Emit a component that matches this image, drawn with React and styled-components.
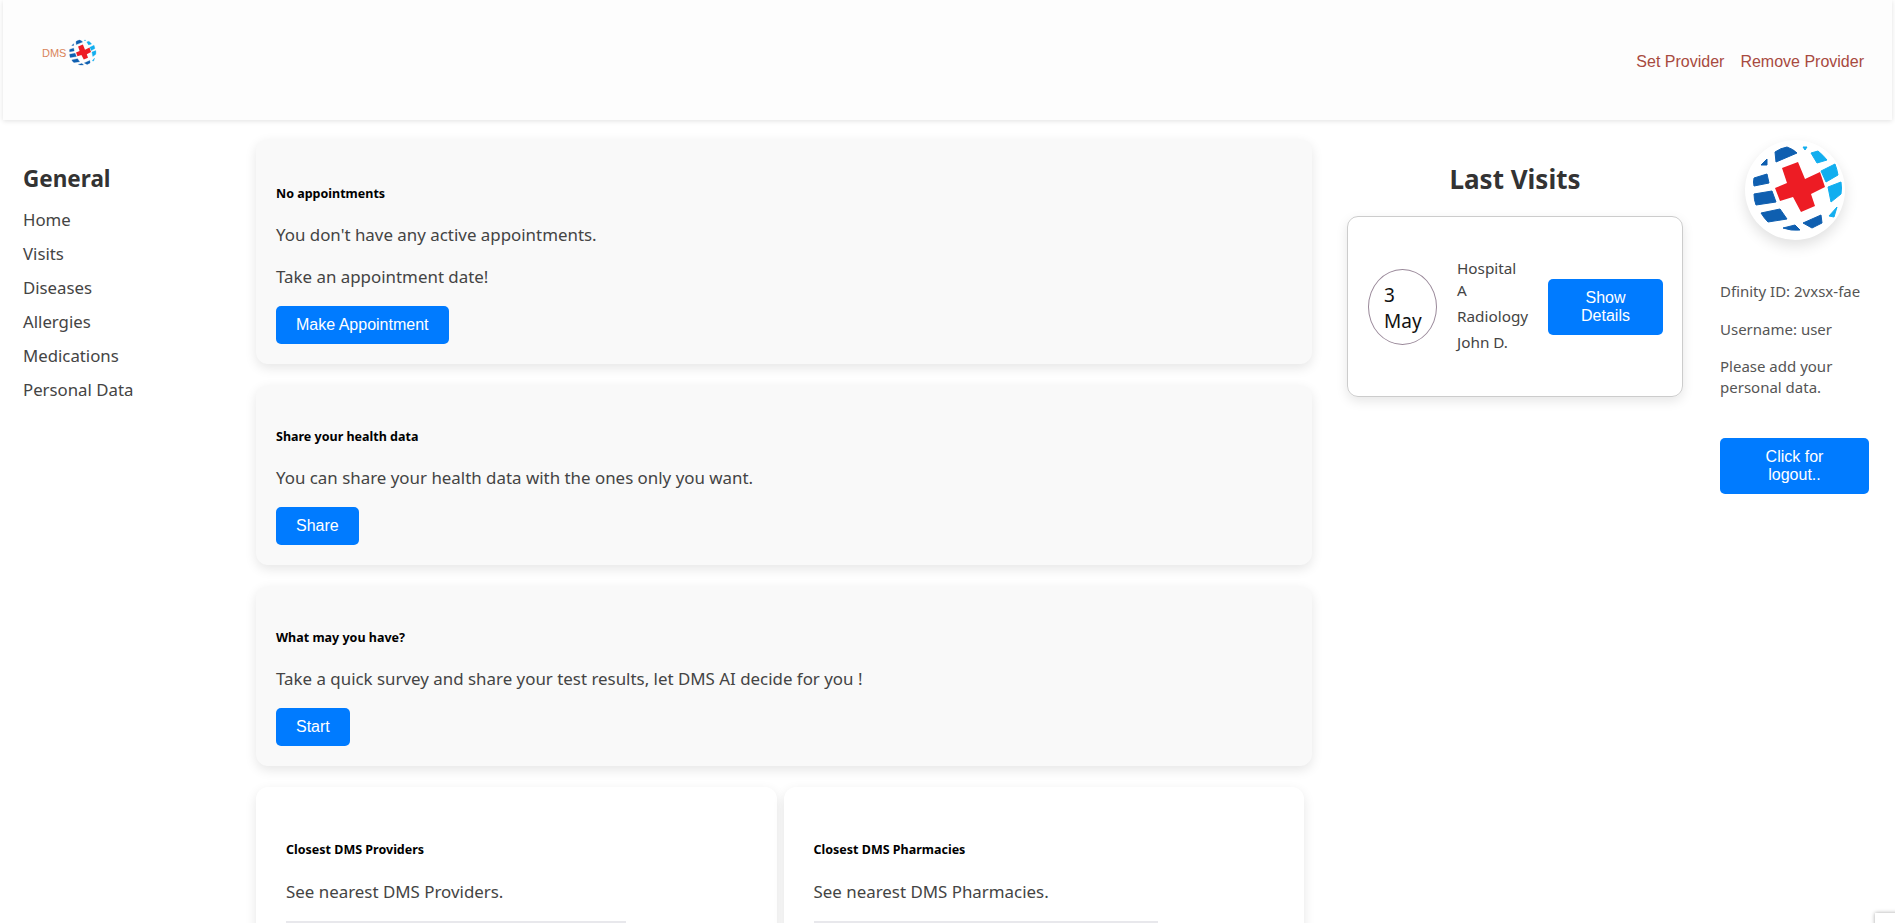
import React from 'react'
import styled, { createGlobalStyle } from 'styled-components'

const GlobalStyle = createGlobalStyle`
  html, body {
    margin: 0;
    padding: 0;
    background: #fff;
    overflow: hidden;
  }
  body {
    font-family: "Noto Sans", "Open Sans", sans-serif;
    color: #333;
  }
`

const Page = styled.div`
  width: 1895px;
  height: 923px;
  overflow: hidden;
`

const Header = styled.header`
  height: 120px;
  margin: 0 3px;
  padding: 38px 28px 0 39px;
  box-sizing: border-box;
  background: #fdfdfd;
  box-shadow: 0 1px 5px rgba(0, 0, 0, 0.12);
  display: flex;
  justify-content: space-between;
  align-items: flex-start;
`

const Logo = styled.div`
  display: flex;
  align-items: center;
  gap: 1px;
  font-family: "Liberation Sans", Arial, sans-serif;
  font-size: 11px;
  color: #d9845a;
`

const ProviderLinks = styled.nav`
  display: flex;
  gap: 16px;
  padding-top: 15px;
`

const ProviderLink = styled.a`
  font-family: "Liberation Sans", Arial, sans-serif;
  font-size: 16px;
  color: #a84a40;
`

const Content = styled.div`
  display: flex;
  align-items: flex-start;
  padding-top: 19px;
`

const Sidebar = styled.aside`
  width: 256px;
  flex: none;
  padding: 23px 0 0 23px;
  box-sizing: border-box;
`

const SideTitle = styled.h2`
  margin: 0 0 7px;
  font-size: 22.5px;
  line-height: 34px;
  font-weight: 700;
`

const SideItem = styled.a`
  display: block;
  font-size: 16.8px;
  line-height: 34px;
  color: #444;
`

const Main = styled.main`
  width: 1056px;
  flex: none;
  display: flex;
  flex-direction: column;
  gap: 21px;
`

const Card = styled.section`
  background: ${props => props.$background || '#f9f9f9'};
  border-radius: 12px;
  box-shadow: 0 4px 12px rgba(0, 0, 0, 0.1);
  padding: ${props => props.$padding || '37px 20px 20px'};
  flex: ${props => props.$flex || 'none'};
`

const CardTitle = styled.h5`
  margin: 1.5px 0 15.5px;
  font-size: 12.5px;
  line-height: 26px;
  font-weight: 700;
  color: #000;
`

const CardText = styled.p`
  margin: 0 0 16px;
  font-size: 16.9px;
  line-height: 26px;
  color: #444;
`

const Button = styled.button`
  display: block;
  border: none;
  border-radius: 5px;
  background: #007bff;
  color: #fff;
  font-family: "Liberation Sans", Arial, sans-serif;
  font-size: 16px;
  line-height: 18px;
  padding: 10px 20px;
`

const LogoutButton = styled(Button)`
  width: 149px;
  margin-top: 40px;
`

const ImageStrip = styled.div`
  height: 40px;
  width: ${props => props.$width}px;
  background: #e8e8ec;
`

const CardRow = styled.div`
  display: flex;
  gap: 7px;
  width: 1048px;
`

const Visits = styled.section`
  width: 336px;
  flex: none;
  margin-left: 35px;
`

const VisitsTitle = styled.h2`
  margin: 0 0 18px;
  padding-top: 21px;
  text-align: center;
  font-size: 26px;
  line-height: 38px;
  font-weight: 700;
`

const VisitCard = styled.div`
  height: 181px;
  box-sizing: border-box;
  border: 1px solid #ccc;
  border-radius: 11px;
  box-shadow: 0 4px 12px rgba(0, 0, 0, 0.1);
  display: flex;
  align-items: center;
  padding: 0 19px 0 20px;
`

const DateCircle = styled.div`
  width: 69px;
  height: 76px;
  flex: none;
  box-sizing: border-box;
  border: 1px solid #998899;
  border-radius: 50%;
  padding: 12px 0 0 15px;
  font-size: 19px;
  line-height: 26px;
  color: #111;
`

const VisitInfo = styled.div`
  width: 75px;
  flex: none;
  margin: 0 16px 0 20px;
  font-size: 15.3px;
  line-height: 22px;
  color: #444;
`

const VisitLine = styled.div`
  margin-bottom: 4px;
`

const Profile = styled.aside`
  width: 149px;
  flex: none;
  margin-left: 37px;
`

const Avatar = styled.div`
  width: 100px;
  height: 100px;
  margin: 1px 0 41px 25px;
  border-radius: 50%;
  background: #fff;
  box-shadow: 0 6px 14px rgba(0, 0, 0, 0.12);
`

const ProfileText = styled.p`
  margin: 0 0 16.5px;
  font-size: 15px;
  line-height: 21px;
  color: #555;
`

const Badge = styled.div`
  position: fixed;
  left: 1875px;
  top: 913px;
  width: 60px;
  height: 60px;
  background: #fff;
  box-shadow: 0 0 4px rgba(0, 0, 0, 0.35);
`

const Globe = ({ size }) => (
  <svg width={size} height={size} viewBox="0 0 100 100" aria-hidden="true">
    <g fill="#0f5fb0" stroke="#0f5fb0" strokeWidth="1" strokeLinejoin="round">
      <path d="M30 12 Q36 8 42 7 Q48 9 52 13 L31 22 Z" />
      <polygon points="16,25 22,19 22,25" />
      <path d="M9 38 L22 34 L24 43 L9 46 Q8 42 9 38 Z" />
      <path d="M9 54 L27 51 L31 62 L11 65 Q9 60 9 54 Z" />
      <path d="M16 73 L35 69 L42 79 L23 82 Q19 78 16 73 Z" />
      <path d="M38 88 L50 85 L55 90 Q46 91 38 88 Z" />
      <path d="M58 83 L76 75 L77 83 L67 88 Z" />
    </g>
    <g fill="#12aeef" stroke="#12aeef" strokeWidth="1" strokeLinejoin="round">
      <polygon points="58,7 62,7 60,10" />
      <path d="M66 13 L73 11 Q78 15 82 20 L72 23 Z" />
      <path d="M76 31 L90 24 Q92 29 93 35 L81 42 Z" />
      <path d="M83 47 L96 42 Q97 48 96 54 L86 62 Z" />
      <polygon points="84,76 92,67 89,77" />
    </g>
    <polygon
      fill="#ed1c24"
      points="37,28 53,22 60,39 75,32 80,47 66,54 70,66 56,72 48,57 35,61 30,48 42,43"
    />
  </svg>
)

const menu = ['Home', 'Visits', 'Diseases', 'Allergies', 'Medications', 'Personal Data']

export default function App() {
  return (
    <Page>
      <GlobalStyle />
      <Header>
        <Logo>
          DMS
          <Globe size={30} />
        </Logo>
        <ProviderLinks>
          <ProviderLink>Set Provider</ProviderLink>
          <ProviderLink>Remove Provider</ProviderLink>
        </ProviderLinks>
      </Header>
      <Content>
        <Sidebar>
          <SideTitle>General</SideTitle>
          {menu.map(item => (
            <SideItem key={item}>{item}</SideItem>
          ))}
        </Sidebar>
        <Main>
          <Card $padding="40px 20px 20px">
            <CardTitle>No appointments</CardTitle>
            <CardText>You don't have any active appointments.</CardText>
            <CardText>Take an appointment date!</CardText>
            <Button>Make Appointment</Button>
          </Card>
          <Card>
            <CardTitle>Share your health data</CardTitle>
            <CardText>You can share your health data with the ones only you want.</CardText>
            <Button>Share</Button>
          </Card>
          <Card>
            <CardTitle>What may you have?</CardTitle>
            <CardText>Take a quick survey and share your test results, let DMS AI decide for you !</CardText>
            <Button>Start</Button>
          </Card>
          <CardRow>
            <Card $background="#fff" $padding="48.5px 30px 20px" $flex="1">
              <CardTitle>Closest DMS Providers</CardTitle>
              <CardText>See nearest DMS Providers.</CardText>
              <ImageStrip $width={340} />
            </Card>
            <Card $background="#fff" $padding="48.5px 30px 20px" $flex="1">
              <CardTitle>Closest DMS Pharmacies</CardTitle>
              <CardText>See nearest DMS Pharmacies.</CardText>
              <ImageStrip $width={344} />
            </Card>
          </CardRow>
        </Main>
        <Visits>
          <VisitsTitle>Last Visits</VisitsTitle>
          <VisitCard>
            <DateCircle>3 May</DateCircle>
            <VisitInfo>
              <VisitLine>Hospital<br />A</VisitLine>
              <VisitLine>Radiology</VisitLine>
              <VisitLine>John D.</VisitLine>
            </VisitInfo>
            <Button>Show Details</Button>
          </VisitCard>
        </Visits>
        <Profile>
          <Avatar>
            <Globe size={100} />
          </Avatar>
          <ProfileText>Dfinity ID: 2vxsx-fae</ProfileText>
          <ProfileText>Username: user</ProfileText>
          <ProfileText>Please add your personal data.</ProfileText>
          <LogoutButton>Click for logout..</LogoutButton>
        </Profile>
      </Content>
      <Badge />
    </Page>
  )
}
